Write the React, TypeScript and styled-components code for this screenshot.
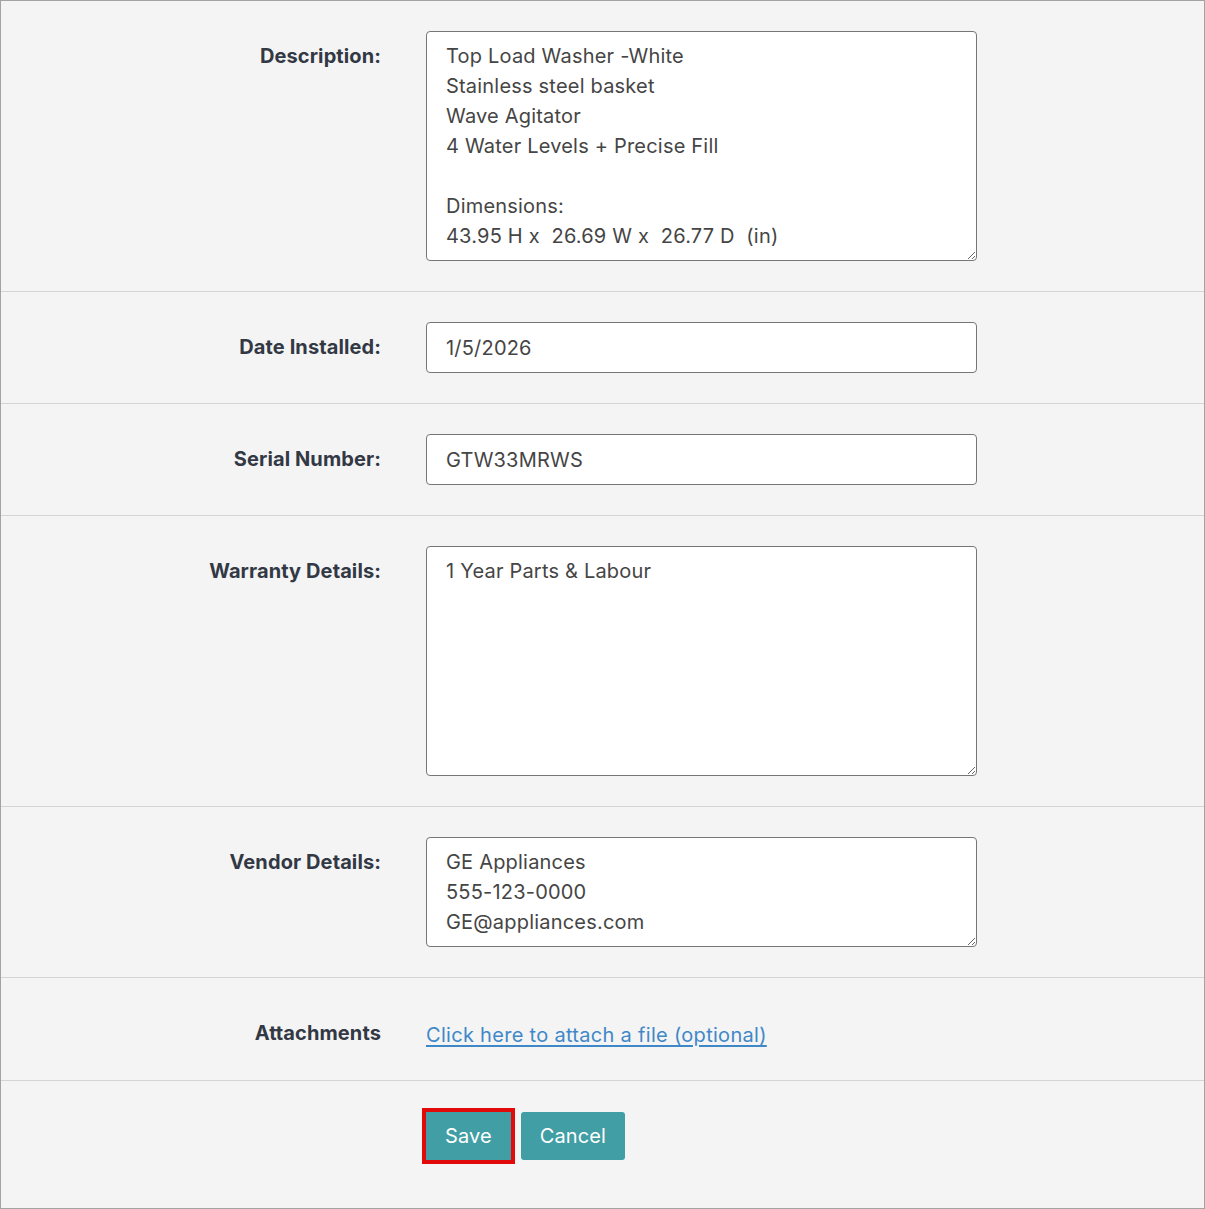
import React from "react";
import styled, { createGlobalStyle } from "styled-components";

const GlobalStyle = createGlobalStyle`
    html, body {
        margin: 0;
        padding: 0;
        background: #f4f4f4;
    }
    body {
        font-family: "Inter", "Liberation Sans", sans-serif;
    }
`;

const Page = styled.form`
    width: 1205px;
    height: 1209px;
    box-sizing: border-box;
    border: 1px solid #a3a3a3;
    background: #f4f4f4;
    display: flex;
    flex-direction: column;
`;

const Row = styled.div<{ $last?: boolean }>`
    display: grid;
    grid-template-columns: 380px 551px;
    column-gap: 45px;
    padding: 30px 0 ${props => props.$last ? '0' : '30px'};
    border-bottom: ${props => props.$last ? 'none' : '1px solid #d4d4d4'};
    flex: ${props => props.$last ? '1' : 'none'};
`;

const Label = styled.label`
    text-align: right;
    font-size: 20px;
    font-weight: 700;
    line-height: 30px;
    letter-spacing: 0.1px;
    padding-top: 10px;
    color: #323844;
`;

const fieldBase = `
    box-sizing: border-box;
    width: 551px;
    border: 1px solid #767676;
    border-radius: 4px;
    background: #fff;
    color: #454545;
    font-family: "Inter", "Liberation Sans", sans-serif;
    font-size: 20px;
    line-height: 30px;
    letter-spacing: 0.2px;
    padding: 9px 19px;
    margin: 0;
    outline: none;
`;

const TextArea = styled.textarea<{ $rows: number }>`
    ${fieldBase}
    height: ${props => props.$rows * 30 + 20}px;
    resize: vertical;
    display: block;
`;

const Input = styled.input`
    ${fieldBase}
    height: 51px;
    display: block;
`;

const LinkCell = styled.div`
    padding-top: 12px;
    line-height: 30px;
    height: 42px;
    box-sizing: border-box;
`;

const AttachLink = styled.a`
    font-size: 20px;
    letter-spacing: 0.3px;
    color: #3f88c8;
    text-decoration: underline;
    text-underline-offset: 3px;
    cursor: pointer;
`;

const Actions = styled.div`
    grid-column: 2;
    display: flex;
    gap: 10px;
    align-items: flex-start;
    padding-top: 1px;
`;

const Button = styled.button<{ $focused?: boolean }>`
    height: 48px;
    padding: 0 19px;
    border: none;
    background: #409ea4;
    color: #fff;
    font-family: "Inter", "Liberation Sans", sans-serif;
    font-size: 20px;
    letter-spacing: 0.1px;
    cursor: pointer;
    outline: ${props => props.$focused ? '4px solid #e00a0a' : 'none'};
    border-radius: ${props => props.$focused ? '0' : '3px'};
`;

const description = `Top Load Washer -White
Stainless steel basket
Wave Agitator
4 Water Levels + Precise Fill

Dimensions:
43.95 H x  26.69 W x  26.77 D  (in)`;

const vendor = `GE Appliances
555-123-0000
GE@appliances.com`;

const App = () => {
    return (
        <>
            <GlobalStyle />
            <Page onSubmit={e => e.preventDefault()}>
                <Row>
                    <Label>Description:</Label>
                    <TextArea $rows={7} defaultValue={description} />
                </Row>
                <Row>
                    <Label>Date Installed:</Label>
                    <Input defaultValue="1/5/2026" />
                </Row>
                <Row>
                    <Label>Serial Number:</Label>
                    <Input defaultValue="GTW33MRWS" />
                </Row>
                <Row>
                    <Label>Warranty Details:</Label>
                    <TextArea $rows={7} defaultValue="1 Year Parts & Labour" />
                </Row>
                <Row>
                    <Label>Vendor Details:</Label>
                    <TextArea $rows={3} defaultValue={vendor} />
                </Row>
                <Row>
                    <Label>Attachments</Label>
                    <LinkCell>
                        <AttachLink>Click here to attach a file (optional)</AttachLink>
                    </LinkCell>
                </Row>
                <Row $last>
                    <Actions>
                        <Button type="submit" $focused>Save</Button>
                        <Button type="button">Cancel</Button>
                    </Actions>
                </Row>
            </Page>
        </>
    );
};

export default App;
